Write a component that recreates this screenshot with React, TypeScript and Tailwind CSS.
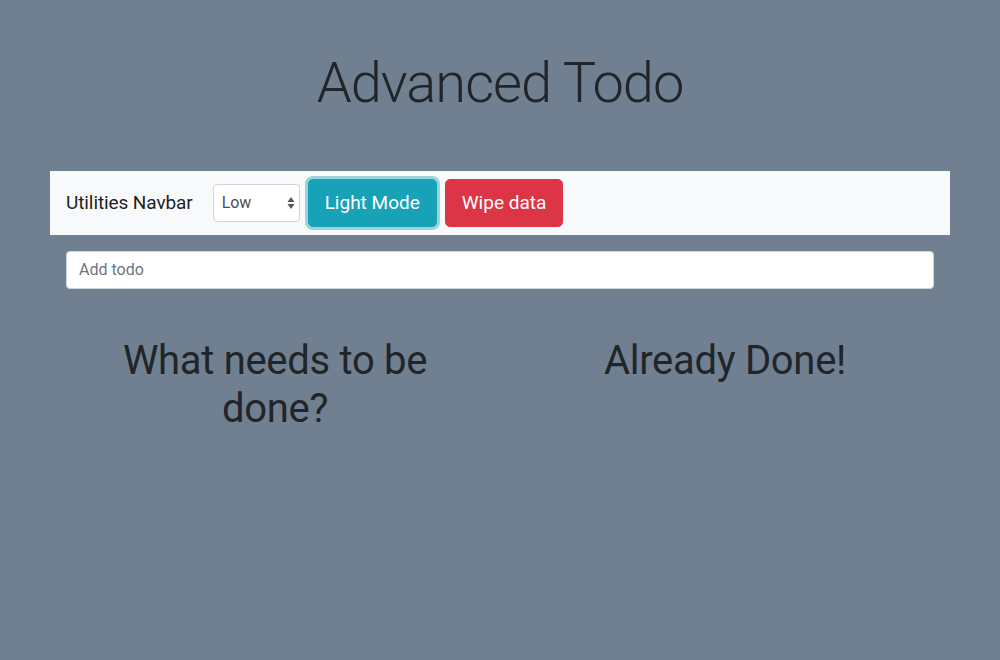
import React from "react";

export default function App() {
  return (
    <div
      className="min-h-[660px] w-full bg-[#708090] text-[#212529]"
      style={{ fontFamily: "Roboto, 'Noto Sans', sans-serif" }}
    >
      <div className="mx-auto w-[900px]">
        <h1 className="pt-[50px] text-center text-[56px] font-light leading-[1.2] tracking-[-1px]">
          Advanced Todo
        </h1>
        <nav className="mt-[54px] flex h-[64px] items-center bg-[#f8f9fa] px-4">
          <span className="mr-[20px] text-[19px] text-black/90 tracking-[-0.1px]">Utilities Navbar</span>
          <div className="flex h-[38px] w-[87px] items-center justify-between rounded-[4px] border border-[#ced4da] bg-white pl-[8px] pr-[4px]">
            <span className="text-[16px] text-[#495057]">Low</span>
            <svg width="8" height="14" viewBox="0 0 8 14">
              <path d="M4 1 L7.5 6 H0.5 Z" fill="#555" />
              <path d="M4 13 L7.5 8 H0.5 Z" fill="#555" />
            </svg>
          </div>
          <button className="ml-[8px] h-[48px] rounded-[5px] border border-[#17a2b8] bg-[#17a2b8] px-[16px] text-[19px] text-white shadow-[0_0_0_3px_rgba(58,176,195,0.5)]">
            Light Mode
          </button>
          <button className="ml-[8px] h-[48px] rounded-[5px] border border-[#dc3545] bg-[#dc3545] px-[16px] text-[19px] text-white">
            Wipe data
          </button>
        </nav>
        <div className="mt-[16px] px-4">
          <div className="flex h-[38px] items-center rounded-[4px] border border-[#ced4da] bg-white px-[12px]">
            <span className="text-[16px] text-[#6c757d]">Add todo</span>
          </div>
        </div>
        <div className="mt-[48px] grid grid-cols-2">
          <div className="flex justify-center">
            <h2 className="w-[330px] text-center text-[40px] font-normal leading-[1.2] tracking-[-0.3px]">
              What needs to be done?
            </h2>
          </div>
          <div className="flex justify-center">
            <h2 className="text-center text-[40px] font-normal leading-[1.2] tracking-[-0.3px]">
              Already Done!
            </h2>
          </div>
        </div>
      </div>
    </div>
  );
}
